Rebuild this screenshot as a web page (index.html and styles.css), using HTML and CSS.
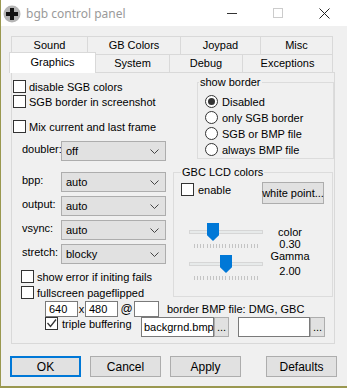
FILE: index.html
```html
<!DOCTYPE html>
<html lang="en">
<head>
    <meta charset="UTF-8">
    <title>bgb control panel</title>
    <link rel="stylesheet" href="styles.css">
</head>
<body>
<div class="window">

    <!-- title bar -->
    <div class="titlebar">
        <svg class="app-icon" width="18" height="18" viewBox="0 0 18 18">
            <circle cx="9" cy="9" r="8.5" fill="#b4b4b4"/>
            <path d="M7 3h4v4h4v4h-4v4H7v-4H3V7h4z" fill="#111"/>
        </svg>
        <span class="title">bgb control panel</span>
        <div class="caption">
            <div class="cbtn"><svg width="10" height="10"><line x1="0" y1="5.5" x2="10" y2="5.5" stroke="#333"/></svg></div>
            <div class="cbtn"><svg width="10" height="10"><rect x="0.5" y="0.5" width="9" height="9" fill="none" stroke="#ccc"/></svg></div>
            <div class="cbtn"><svg width="11" height="11"><path d="M0.5 0.5L10.5 10.5M10.5 0.5L0.5 10.5" stroke="#222" fill="none"/></svg></div>
        </div>
    </div>

    <!-- tabs -->
    <div class="tabs">
        <div class="tabrow">
            <div class="tab" style="width:76px">Sound</div>
            <div class="tab" style="width:93px">GB Colors</div>
            <div class="tab" style="width:80px">Joypad</div>
            <div class="tab last" style="width:73px">Misc</div>
        </div>
        <div class="tabrow">
            <div class="tab selected" style="width:87px">Graphics</div>
            <div class="tab" style="width:73px">System</div>
            <div class="tab" style="width:73px">Debug</div>
            <div class="tab last" style="width:91px">Exceptions</div>
        </div>
    </div>

    <div class="panel">
        <div class="cols">
            <div class="left">
                <div class="chk first"><span class="box"></span>disable SGB colors</div>
                <div class="chk second"><span class="box"></span>SGB border in screenshot</div>
                <div class="chk third"><span class="box"></span>Mix current and last frame</div>

                <div class="field doubler">
                    <span class="label">doubler:</span>
                    <div class="select">off<svg width="9" height="5"><polyline points="0.5,0.5 4.5,4.5 8.5,0.5" fill="none" stroke="#444"/></svg></div>
                </div>
                <div class="field bpp">
                    <span class="label">bpp:</span>
                    <div class="select">auto<svg width="9" height="5"><polyline points="0.5,0.5 4.5,4.5 8.5,0.5" fill="none" stroke="#444"/></svg></div>
                </div>
                <div class="field">
                    <span class="label">output:</span>
                    <div class="select">auto<svg width="9" height="5"><polyline points="0.5,0.5 4.5,4.5 8.5,0.5" fill="none" stroke="#444"/></svg></div>
                </div>
                <div class="field">
                    <span class="label">vsync:</span>
                    <div class="select">auto<svg width="9" height="5"><polyline points="0.5,0.5 4.5,4.5 8.5,0.5" fill="none" stroke="#444"/></svg></div>
                </div>
                <div class="field">
                    <span class="label">stretch:</span>
                    <div class="select">blocky<svg width="9" height="5"><polyline points="0.5,0.5 4.5,4.5 8.5,0.5" fill="none" stroke="#444"/></svg></div>
                </div>

                <div class="chk indent showerr"><span class="box"></span>show error if initing fails</div>
                <div class="chk indent fullscreen"><span class="box"></span>fullscreen pageflipped</div>
            </div>

            <div class="right">
                <fieldset class="group border-group">
                    <legend>show border</legend>
                    <div class="radio first"><span class="dot checked"></span>Disabled</div>
                    <div class="radio"><span class="dot"></span>only SGB border</div>
                    <div class="radio"><span class="dot"></span>SGB or BMP file</div>
                    <div class="radio"><span class="dot"></span>always BMP file</div>
                </fieldset>

                <fieldset class="group lcd-group">
                    <legend>GBC LCD colors</legend>
                    <div class="lcd-top">
                        <div class="chk enable"><span class="box"></span>enable</div>
                        <div class="btn white-point">white point...</div>
                    </div>
                    <div class="sliders">
                        <div class="slider-col">
                            <div class="slider">
                                <div class="track"></div>
                                <div class="thumb" style="left:18px"></div>
                                <div class="ticks"><i></i><i></i><i></i><i></i><i></i><i></i><i></i><i></i><i></i><i></i><i></i><i></i><i></i><i></i><i></i><i></i><i></i><i></i><i></i><i></i><i></i></div>
                            </div>
                            <div class="slider">
                                <div class="track"></div>
                                <div class="thumb" style="left:31px"></div>
                                <div class="ticks"><i></i><i></i><i></i><i></i><i></i><i></i><i></i><i></i><i></i><i></i><i></i><i></i><i></i><i></i><i></i><i></i><i></i><i></i><i></i><i></i><i></i></div>
                            </div>
                        </div>
                        <div class="slider-labels">
                            <div>color</div>
                            <div>0.30</div>
                            <div>Gamma</div>
                            <div class="gamma-val">2.00</div>
                        </div>
                    </div>
                </fieldset>
            </div>
        </div>

        <div class="res-row">
            <div class="edit small">640</div>
            <span class="sep">x</span>
            <div class="edit small">480</div>
            <span class="sep at">@</span>
            <div class="edit tiny"></div>
            <span class="bmp-label">border BMP file: DMG, GBC</span>
        </div>

        <div class="buf-row">
            <div class="chk triple">
                <span class="box"><svg width="11" height="11"><polyline points="1.5,5 4.5,8.5 10,1.5" fill="none" stroke="#333" stroke-width="1.3"/></svg></span>triple buffering
            </div>
            <div class="edit file">backgrnd.bmp</div>
            <div class="btn browse">...</div>
            <div class="edit file second-file"></div>
            <div class="btn browse">...</div>
        </div>
    </div>

    <div class="buttons">
        <div class="btn dlg default">OK</div>
        <div class="btn dlg">Cancel</div>
        <div class="btn dlg">Apply</div>
        <div class="btn dlg defaults">Defaults</div>
    </div>
</div>
</body>
</html>
```

FILE: styles.css
```css
body {
    margin: 0;
    background-color: #9a9850;
    font-family: "Liberation Sans", Arial, sans-serif;
    font-size: 11px;
    color: #000;
}

.window {
    margin-left: 1px;
    width: 346px;
    height: 386px;
    background: #f0f0f0;
    overflow: hidden;
}

/* title bar */
.titlebar {
    height: 26px;
    background: #fff;
    display: flex;
    align-items: center;
}

.app-icon {
    margin-left: 2px;
    margin-top: 1px;
}

.title {
    margin-left: 5px;
    font-family: "Noto Sans", sans-serif;
    font-size: 12px;
    color: #9a9a9a;
}

.caption {
    margin-left: auto;
    display: flex;
}

.cbtn {
    width: 46px;
    height: 26px;
    display: flex;
    align-items: center;
    justify-content: center;
}

/* tabs */
.tabs {
    margin: 10px 0 0 10px;
}

.tabrow {
    display: flex;
    height: 18px;
}

.tab {
    box-sizing: border-box;
    height: 18px;
    border-top: 1px solid #d9d9d9;
    border-left: 1px solid #d9d9d9;
    text-align: center;
    line-height: 17px;
    background: #f0f0f0;
}

.tab.last {
    border-right: 1px solid #d9d9d9;
}

.tab.selected {
    height: 21px;
    margin: -2px 0 -1px -2px;
    background: #fff;
    border-right: 1px solid #d9d9d9;
    line-height: 18px;
    position: relative;
    z-index: 1;
}

.tab.selected + .tab {
    border-left: none;
}

/* tab page */
.panel {
    margin-left: 10px;
    width: 324px;
    height: 272px;
    box-sizing: border-box;
    border: 1px solid #d9d9d9;
    background: #f0f0f0;
}

.cols {
    display: flex;
    height: 226px;
}

.left {
    width: 161px;
    display: flex;
    flex-direction: column;
}

.right {
    width: 160px;
}

.chk {
    display: flex;
    align-items: center;
    height: 13px;
    white-space: nowrap;
}

.box {
    box-sizing: border-box;
    width: 13px;
    height: 13px;
    border: 1px solid #333;
    background: #fff;
    margin-right: 3px;
    display: flex;
    align-items: center;
    justify-content: center;
}

.chk.first { margin: 7px 0 0 1px; }
.chk.second { margin: 2px 0 0 1px; }
.chk.third { margin: 12px 0 0 1px; }
.chk.indent { margin-left: 9px; }
.chk.showerr { margin-top: 6px; }
.chk.fullscreen { margin-top: 3px; }

.field {
    display: flex;
    align-items: center;
    margin-top: 4px;
    height: 20px;
}

.field.doubler { margin-top: 8px; }
.field.bpp { margin-top: 11px; }

.label {
    width: 39px;
    margin-left: 10px;
    margin-top: -4px;
}

.select {
    box-sizing: border-box;
    width: 105px;
    height: 20px;
    border: 1px solid #adadad;
    background: #e1e1e1;
    display: flex;
    align-items: center;
    justify-content: space-between;
    padding: 0 6px 0 4px;
}

/* group boxes */
.group {
    margin: 0;
    border: 1px solid #dcdcdc;
    padding: 0 0 0 7px;
}

.group legend {
    padding: 0 1px;
    line-height: 12px;
}

.border-group {
    margin: 3px 0 0 24px;
    width: 137px;
    box-sizing: border-box;
    padding-bottom: 2px;
}

.border-group legend {
    margin-left: -6px;
}

.radio {
    display: flex;
    align-items: center;
    height: 13px;
    margin-top: 3px;
}

.radio.first {
    margin-top: 7px;
}

.dot {
    box-sizing: border-box;
    width: 13px;
    height: 13px;
    border: 1px solid #333;
    border-radius: 50%;
    background: #fff;
    margin-right: 4px;
    display: flex;
    align-items: center;
    justify-content: center;
}

.dot.checked::after {
    content: "";
    width: 7px;
    height: 7px;
    border-radius: 50%;
    background: #333;
}

.lcd-group {
    margin-top: 7px;
    width: 160px;
    box-sizing: border-box;
    padding: 0 8px 9px 7px;
}

.lcd-top {
    display: flex;
    align-items: flex-start;
    justify-content: space-between;
    margin-top: 4px;
}

.chk.enable {
    margin-top: 1px;
}

.chk.enable .box {
    margin-right: 4px;
}

.btn {
    box-sizing: border-box;
    border: 1px solid #adadad;
    background: #e1e1e1;
    display: flex;
    align-items: center;
    justify-content: center;
    white-space: nowrap;
}

.white-point {
    width: 62px;
    height: 22px;
}

.sliders {
    display: flex;
    margin-top: 19px;
}

.slider-col {
    margin-left: 8px;
}

.slider {
    position: relative;
    width: 74px;
    height: 26px;
    margin-bottom: 6px;
}

.track {
    position: absolute;
    left: 0;
    right: 0;
    top: 7px;
    height: 4px;
    box-sizing: border-box;
    background: #e7eaea;
    border: 1px solid #d6d6d6;
}

.thumb {
    position: absolute;
    top: 0;
    width: 12px;
    height: 18px;
    background: #0078d7;
    clip-path: polygon(0 0, 100% 0, 100% 68%, 50% 100%, 0 68%);
}

.ticks {
    position: absolute;
    left: 5px;
    right: 5px;
    top: 21px;
    height: 4px;
    display: flex;
    justify-content: space-between;
}

.ticks i {
    width: 1px;
    background: #c4c4c4;
}

.slider-labels {
    width: 40px;
    margin-left: 7px;
    padding-top: 3px;
    text-align: center;
    line-height: 12px;
}

.slider-labels .gamma-val {
    margin-top: 3px;
}

/* bottom rows of the page */
.res-row {
    display: flex;
    align-items: center;
    margin: 2px 0 0 33px;
    height: 16px;
}

.edit {
    box-sizing: border-box;
    border: 1px solid #7a7a7a;
    background: #fff;
    padding: 0 3px;
    display: flex;
    align-items: center;
    overflow: hidden;
    white-space: nowrap;
}

.edit.small {
    width: 33px;
    height: 16px;
}

.edit.tiny {
    width: 25px;
    height: 16px;
}

.sep {
    width: 7px;
    text-align: center;
}

.sep.at {
    width: 15px;
    margin-left: 1px;
    font-size: 12px;
}

.bmp-label {
    margin-left: 8px;
}

.buf-row {
    display: flex;
    align-items: flex-start;
    margin-left: 33px;
    height: 20px;
}

.chk.triple {
    width: 96px;
    margin-top: 0;
}

.chk.triple .box {
    margin-right: 4px;
}

.edit.file {
    width: 73px;
    height: 20px;
    padding: 0 2px;
}

.edit.second-file {
    margin-left: 9px;
    width: 72px;
}

.btn.browse {
    width: 15px;
    height: 20px;
    align-items: flex-end;
    padding-bottom: 3px;
}

/* dialog buttons */
.buttons {
    display: flex;
    margin: 12px 0 0 9px;
    gap: 9px;
}

.btn.dlg {
    width: 71px;
    height: 21px;
    font-size: 12px;
}

.btn.default {
    border: 2px solid #0078d7;
}

.btn.defaults {
    margin-left: 16px;
}
```
